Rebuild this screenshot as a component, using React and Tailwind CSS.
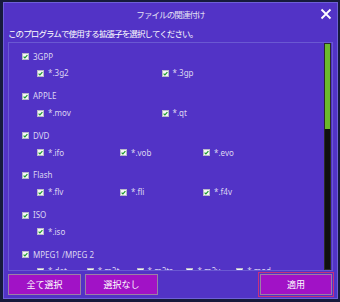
import React from "react";

const groups = [
  { name: "3GPP", items: ["*.3g2", "*.3gp"], cols: "grid-cols-2" },
  { name: "APPLE", items: ["*.mov", "*.qt"], cols: "grid-cols-2" },
  { name: "DVD", items: ["*.ifo", "*.vob", "*.evo"], cols: "grid-cols-3" },
  { name: "Flash", items: ["*.flv", "*.fli", "*.f4v"], cols: "grid-cols-3" },
  { name: "ISO", items: ["*.iso"], cols: "grid-cols-1" },
  { name: "MPEG1 /MPEG 2", items: ["*.dat", "*.m2t", "*.m2ts", "*.m2v", "*.mod"], cols: "grid-cols-5" },
];

const jp = { fontFamily: '"Noto Sans CJK JP", "Noto Sans", sans-serif' };

function Check() {
  return (
    <span className="w-[7px] h-[7px] shrink-0 bg-[#f6f6f6] border border-[#b8b8c8] flex items-center justify-center">
      <svg width="5" height="5" viewBox="0 0 5 5">
        <path d="M0.6 2.6 L1.9 3.9 L4.4 1.1" fill="none" stroke="#1e9a2e" strokeWidth="1.2" />
      </svg>
    </span>
  );
}

function Group({ g }) {
  return (
    <div className="pb-[6px]">
      <div className="h-[16.6px] flex items-center gap-[4px]">
        <Check />
        <span className="text-[#dcd6f2]">{g.name}</span>
      </div>
      <div className={"grid w-[249px] ml-[15px] h-[17px] " + g.cols}>
        {g.items.map((it) => (
          <div key={it} className="flex items-center gap-[4px]">
            <Check />
            <span className="text-[#dcd6f2]">{it}</span>
          </div>
        ))}
      </div>
    </div>
  );
}

export default function App() {
  return (
    <div
      className="w-[340px] h-[302px] bg-[#161a3c] pt-[2px] pl-[3px] pr-[2px] pb-[3px] text-[8px] leading-none"
      style={{ fontFamily: '"Noto Sans", "Noto Sans CJK JP", sans-serif' }}
    >
      <div className="h-full border border-[#6e5fd8] bg-[#5233c6] flex flex-col">
        {/* title bar */}
        <div className="h-[22px] relative flex items-center justify-center">
          <span className="text-[#e4e0f4] text-[8.5px] tracking-[-0.9px]" style={jp}>
            ファイルの関連付け
          </span>
          <svg className="absolute right-[5px] top-[5px]" width="12" height="12" viewBox="0 0 12 12">
            <path d="M1.5 1.5 L10.5 10.5 M10.5 1.5 L1.5 10.5" stroke="#ffffff" strokeWidth="1.8" />
          </svg>
        </div>
        <div className="h-[16px] px-[4px] flex items-center text-white text-[8.5px] tracking-[-0.9px]" style={jp}>
          このプログラムで使用する拡張子を選択してください。
        </div>
        {/* list */}
        <div className="mx-[4px] mt-[1px] h-[229px] border border-[#6a58d2] flex overflow-hidden">
          <div className="flex-1 pl-[13px] pt-[5.4px] overflow-hidden">
            {groups.map((g) => (
              <Group key={g.name} g={g} />
            ))}
          </div>
          <div className="w-[7px] mr-[1px] flex flex-col border border-[#2a2a2a] bg-[#101010]">
            <div className="h-[85px] bg-[#6cb82c]" />
          </div>
        </div>
        {/* buttons */}
        <div className="h-[27px] px-[4px] pr-[3px] flex items-center text-[9px]" style={jp}>
          <button className="w-[73px] h-[21px] bg-[#a112c6] border border-[#9c7fa6] text-white">
            全て選択
          </button>
          <button className="ml-[4px] w-[73px] h-[21px] bg-[#a112c6] border border-[#9c7fa6] text-white">
            選択なし
          </button>
          <div className="ml-auto border border-[#c8307e] p-[1px]">
            <button className="w-[72px] h-[21px] bg-[#a112c6] border border-[#9c7fa6] text-white block">
              適用
            </button>
          </div>
        </div>
      </div>
    </div>
  );
}
